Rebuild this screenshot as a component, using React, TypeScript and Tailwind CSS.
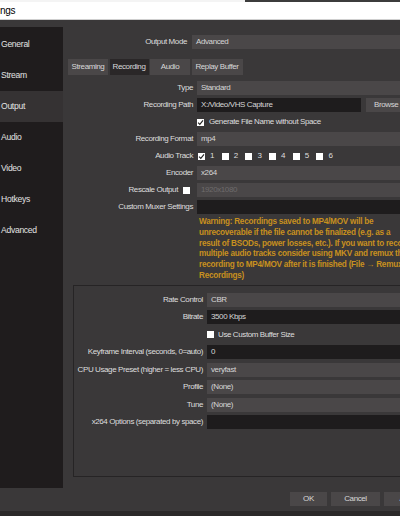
import React from "react";

const font = "font-['Liberation_Sans',Arial,sans-serif]";

const Select = ({ text, dim = false }: { text: string; dim?: boolean }) => (
  <div className={`h-[14px] bg-[#4a4748] flex items-center pl-[4px] ${dim ? "text-[#6e6b6c]" : "text-[#d6d6d6]"}`}>
    {text}
  </div>
);

const Input = ({ text = "" }: { text?: string }) => (
  <div className="h-[14px] bg-[#1e1c1d] flex items-center pl-[4px] text-[#d6d6d6]">{text}</div>
);

const Check = ({ checked = false }: { checked?: boolean }) => (
  <span className="w-[7px] h-[7px] bg-white shrink-0 flex items-center justify-center">
    {checked && (
      <svg viewBox="0 0 10 10" className="w-[7px] h-[7px]">
        <path d="M1.5 5.2 L4 7.6 L8.6 2" fill="none" stroke="#222" strokeWidth="1.6" />
      </svg>
    )}
  </span>
);

const Label = ({ children }: { children: React.ReactNode }) => (
  <div className="h-[14px] flex items-center justify-end whitespace-nowrap text-[#dedede]">{children}</div>
);

const sidebar = ["General", "Stream", "Output", "Audio", "Video", "Hotkeys", "Advanced"];
const tabs = [
  { name: "Streaming", w: "w-[40px]" },
  { name: "Recording", w: "w-[39px]" },
  { name: "Audio", w: "w-[40px]" },
  { name: "Replay Buffer", w: "w-[51px]" },
];

const warning = [
  "Warning: Recordings saved to MP4/MOV will be",
  "unrecoverable if the file cannot be finalized (e.g. as a",
  "result of BSODs, power losses, etc.). If you want to record",
  "multiple audio tracks consider using MKV and remux the",
  "recording to MP4/MOV after it is finished (File → Remux",
  "Recordings)",
];

export default function App() {
  return (
    <div className={`w-[400px] h-[516px] overflow-hidden bg-[#3a3839] flex flex-col ${font} text-[8px] tracking-[-0.4px]`}>
      {/* window title */}
      <div className="h-[2px] flex shrink-0">
        <div className="w-[245px] bg-[#f4f4f4]" />
        <div className="flex-1 bg-[#3c3c3c]" />
      </div>
      <div className="h-[18px] shrink-0 bg-white border-b border-[#cfcfcf] flex items-center text-[10px] tracking-[-0.3px] text-black">
        ngs
      </div>

      <div className="flex pt-[7px] shrink-0">
        {/* sidebar */}
        <div className="w-[63px] h-[461px] shrink-0 bg-[#1f1c1d] pt-[2px] flex flex-col">
          {sidebar.map((s) => (
            <div
              key={s}
              className={`h-[31px] flex items-center pl-[1px] text-[8.6px] tracking-[-0.3px] text-[#e2e2e2] ${s === "Output" ? "bg-[#353233]" : ""}`}
            >
              {s}
            </div>
          ))}
        </div>

        {/* content */}
        <div className="w-[380px] shrink-0 flex flex-col pt-[8px]">
          <div className="flex gap-[5px] h-[14px]">
            <div className="w-[124px] shrink-0">
              <Label>Output Mode</Label>
            </div>
            <div className="flex-1">
              <Select text="Advanced" />
            </div>
          </div>

          <div className="flex gap-[1.5px] ml-[5px] mt-[10px] h-[16px]">
            {tabs.map((t) => (
              <div
                key={t.name}
                className={`${t.w} flex items-center justify-center text-[#d8d8d8] ${t.name === "Recording" ? "bg-[#2a2728]" : "bg-[#4a4748]"}`}
              >
                {t.name}
              </div>
            ))}
          </div>

          <div className="ml-[3px] mt-[6px] flex flex-col gap-[3px]">
            <div className="grid grid-cols-[127px_1fr] gap-x-[4px] gap-y-[3px] auto-rows-[14px]">
              <Label>Type</Label>
              <Select text="Standard" />
              <Label>Recording Path</Label>
              <div className="flex gap-[5px]">
                <div className="w-[164px] shrink-0">
                  <Input text="X:/Video/VHS Capture" />
                </div>
                <div className="flex-1 h-[14px] bg-[#4a4748] flex items-center pl-[8px] text-[#d6d6d6]">Browse</div>
              </div>
              <div />
              <div className="flex items-center gap-[5px] text-[#dedede]">
                <Check checked />
                Generate File Name without Space
              </div>
              <Label>Recording Format</Label>
              <Select text="mp4" />
              <Label>Audio Track</Label>
              <div className="flex items-center ml-[1px] text-[#dedede]">
                {[1, 2, 3, 4, 5, 6].map((n) => (
                  <div key={n} className="w-[23.7px] shrink-0 flex items-center gap-[5px]">
                    <Check checked={n === 1} />
                    {n}
                  </div>
                ))}
              </div>
              <Label>Encoder</Label>
              <Select text="x264" />
              <Label>
                Rescale Output
                <span className="ml-[5px] mr-[3px]">
                  <Check />
                </span>
              </Label>
              <Select text="1920x1080" dim />
              <Label>Custom Muxer Settings</Label>
              <Input />
            </div>

            <div className="ml-[133px] font-bold text-[8.2px] tracking-[-0.25px] leading-[10.8px] text-[#c8901e] whitespace-nowrap">
              {warning.map((l) => (
                <div key={l}>{l}</div>
              ))}
            </div>

            {/* encoder group */}
            <div className="ml-[7px] h-[192px] border border-[#262425] border-r-0 pt-[7px]">
              <div className="grid grid-cols-[129px_1fr] gap-x-[4px] gap-y-[3.5px] auto-rows-[14px]">
                <Label>Rate Control</Label>
                <Select text="CBR" />
                <Label>Bitrate</Label>
                <Input text="3500 Kbps" />
                <div />
                <div className="flex items-center gap-[4px] text-[#dedede]">
                  <Check />
                  Use Custom Buffer Size
                </div>
                <Label>Keyframe Interval (seconds, 0=auto)</Label>
                <Input text="0" />
                <Label>CPU Usage Preset (higher = less CPU)</Label>
                <Select text="veryfast" />
                <Label>Profile</Label>
                <Select text="(None)" />
                <Label>Tune</Label>
                <Select text="(None)" />
                <Label>x264 Options (separated by space)</Label>
                <Input />
              </div>
            </div>
          </div>
        </div>
      </div>

      {/* buttons */}
      <div className="flex gap-[4px] ml-[290px] mt-[4px] h-[14px] shrink-0 text-[#d8d8d8]">
        <div className="w-[37px] shrink-0 bg-[#4a4748] flex items-center justify-center">OK</div>
        <div className="w-[49px] shrink-0 bg-[#4a4748] flex items-center justify-center">Cancel</div>
        <div className="w-[49px] shrink-0 bg-[#4a4748] flex items-center justify-center">Apply</div>
      </div>
      <div className="flex-1 mt-[5px] bg-[#2b2929]" />
    </div>
  );
}
